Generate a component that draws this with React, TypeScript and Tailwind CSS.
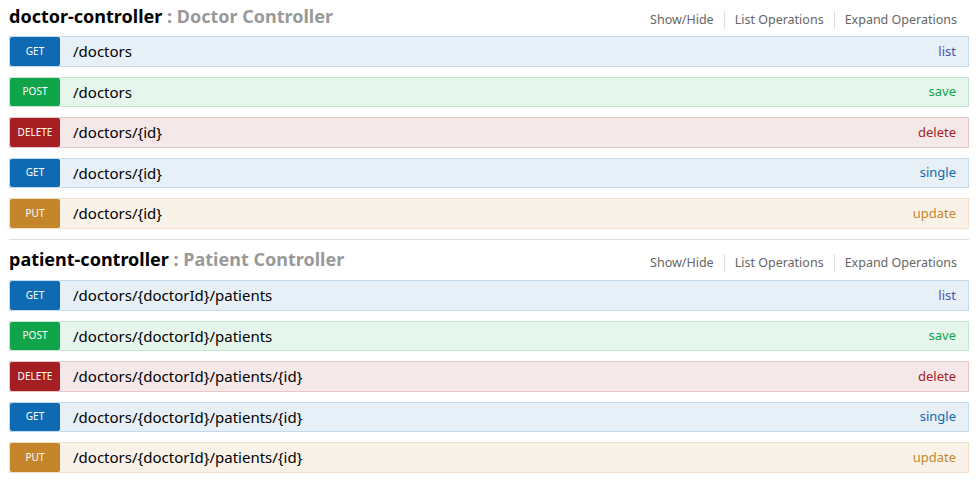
import type { ReactNode } from 'react';

type Method = 'GET' | 'POST' | 'DELETE' | 'PUT';

interface Operation {
    method: Method;
    path: string;
    summary: string;
}

const methodStyles: Record<Method, { row: string; badge: string }> = {
    GET: { row: 'bg-[#e7f0f7] border-[#c3d9ec]', badge: 'bg-[#0f6ab4]' },
    POST: { row: 'bg-[#e7f6ec] border-[#c3e8d1]', badge: 'bg-[#10a54a]' },
    DELETE: { row: 'bg-[#f5e8e8] border-[#e8c6c7]', badge: 'bg-[#a41e22]' },
    PUT: { row: 'bg-[#f9f2e9] border-[#f0e0ca]', badge: 'bg-[#c5862b]' },
};

const summaryColors: Record<string, string> = {
    list: 'text-[#4b54b3]',
    save: 'text-[#10a54a]',
    delete: 'text-[#a41e22]',
    single: 'text-[#0f6ab4]',
    update: 'text-[#c5862b]',
};

const doctorOps: Operation[] = [
    { method: 'GET', path: '/doctors', summary: 'list' },
    { method: 'POST', path: '/doctors', summary: 'save' },
    { method: 'DELETE', path: '/doctors/{id}', summary: 'delete' },
    { method: 'GET', path: '/doctors/{id}', summary: 'single' },
    { method: 'PUT', path: '/doctors/{id}', summary: 'update' },
];

const patientOps: Operation[] = [
    { method: 'GET', path: '/doctors/{doctorId}/patients', summary: 'list' },
    { method: 'POST', path: '/doctors/{doctorId}/patients', summary: 'save' },
    { method: 'DELETE', path: '/doctors/{doctorId}/patients/{id}', summary: 'delete' },
    { method: 'GET', path: '/doctors/{doctorId}/patients/{id}', summary: 'single' },
    { method: 'PUT', path: '/doctors/{doctorId}/patients/{id}', summary: 'update' },
];

function OperationRow({ op }: { op: Operation }) {
    const style = methodStyles[op.method];
    return (
        <li className={`flex items-stretch h-[30.5px] border ${style.row}`}>
            <span className={`w-[50px] shrink-0 flex items-center justify-center rounded-[2px] text-white text-[10px] ${style.badge}`}>
                {op.method}
            </span>
            <span className="flex-1 flex items-center pl-[13px] text-[15px] text-black">{op.path}</span>
            <span className={`flex items-center pr-3 text-[13px] ${summaryColors[op.summary]}`}>{op.summary}</span>
        </li>
    );
}

function Resource({ name, description, ops, first, last }: {
    name: string;
    description: string;
    ops: Operation[];
    first?: boolean;
    last?: boolean;
}) {
    const links = ['Show/Hide', 'List Operations', 'Expand Operations'];
    return (
        <section className={`${last ? '' : 'border-b border-[#dddddd]'} pb-[10px]`}>
            {/* Heading */}
            <div className={`flex items-baseline justify-between ${first ? 'h-9 pt-1' : 'h-[40.5px] pt-[7.5px]'}`}>
                <h2 className="text-[18px] leading-6 font-bold text-black">
                    {name} <span className="text-[#999999]">: {description}</span>
                </h2>
                <ul className="flex pr-[2px] text-[12.5px] leading-[18px] text-[#666666] relative top-[1px]">
                    {links.map((l, i) => (
                        <li key={l} className={`px-[10px] ${i > 0 ? 'border-l border-[#dddddd]' : ''}`}>{l}</li>
                    ))}
                </ul>
            </div>
            <ul className="flex flex-col gap-[10px]">
                {ops.map((op, i) => <OperationRow key={i} op={op} />)}
            </ul>
        </section>
    );
}

function Page({ children }: { children: ReactNode }) {
    return (
        <div className="w-[979px] h-[480px] overflow-hidden bg-white pl-[9px] pr-[10px] font-['Noto_Sans','Open_Sans',sans-serif]">
            {children}
        </div>
    );
}

export default function App() {
    return (
        <Page>
            <Resource name="doctor-controller" description="Doctor Controller" ops={doctorOps} first />
            <Resource name="patient-controller" description="Patient Controller" ops={patientOps} last />
        </Page>
    );
}
